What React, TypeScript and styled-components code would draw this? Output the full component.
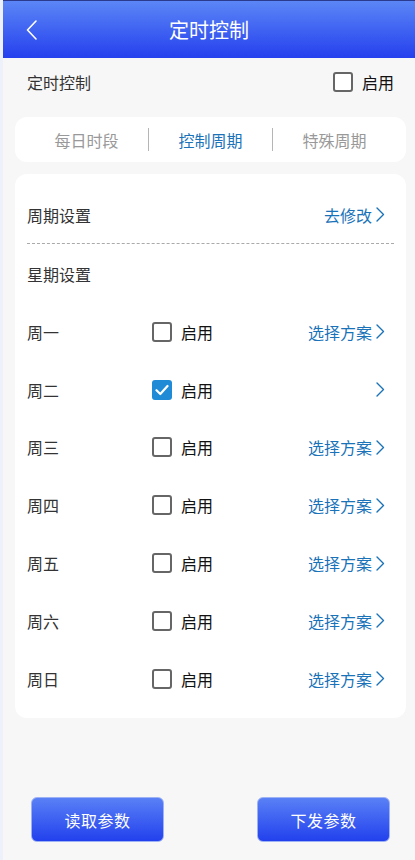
import React, { useState } from "react";
import styled, { createGlobalStyle } from "styled-components";

const Global = createGlobalStyle`
  html, body { margin: 0; padding: 0; background: #f7f7f7; }
  body { font-family: "Noto Sans CJK SC", "Noto Sans", sans-serif; }
  * { box-sizing: border-box; }
`;

const Page = styled.div`
  width: 415px;
  height: 860px;
  background: #f7f7f7;
  border-left: 3px solid #edf2fa;
  display: flex;
  flex-direction: column;
  overflow: hidden;
`;

const Header = styled.header`
  height: 58px;
  margin-left: -3px;
  border-top: 1px solid #2c3a8e;
  background: linear-gradient(180deg, #5b86f6 0%, #2540ee 100%);
  display: grid;
  grid-template-columns: 60px 1fr 60px;
  align-items: center;
  color: #fff;
`;

const BackBtn = styled.div`
  display: flex;
  align-items: center;
  padding-left: 26px;
`;

const Title = styled.h1`
  margin: 0;
  font-size: 20px;
  font-weight: 400;
  text-align: center;
  letter-spacing: 0;
  margin-left: 3px;
`;

const TopRow = styled.div`
  height: 48px;
  display: flex;
  align-items: center;
  justify-content: space-between;
  padding: 0 21px 0 24px;
`;

const Label = styled.span`
  font-size: 16px;
  color: #333;
`;

const CheckWrap = styled.label`
  display: flex;
  align-items: center;
  gap: 9px;
  cursor: pointer;
`;

const Box = styled.span<{ $checked: boolean }>`
  width: 20px;
  height: 20px;
  border-radius: 3px;
  border: ${(p) => (p.$checked ? "none" : "2px solid #666")};
  background: ${(p) => (p.$checked ? "#1f8ad6" : "#fff")};
  display: flex;
  align-items: center;
  justify-content: center;
`;

const EnableText = styled.span`
  font-size: 16px;
  color: #111;
`;

const Cards = styled.div`
  padding: 11px 9px 0 12px;
  display: flex;
  flex-direction: column;
  gap: 12px;
`;

const TabCard = styled.div`
  background: #fff;
  border-radius: 12px;
  height: 45px;
  padding: 0 10px;
  display: flex;
  align-items: center;
`;

const Tab = styled.div<{ $active: boolean }>`
  flex: 1;
  text-align: center;
  font-size: 16px;
  color: ${(p) => (p.$active ? "#1a73b9" : "#999")};
`;

const TabSep = styled.div`
  width: 1px;
  height: 23px;
  background: #b5b5b5;
`;

const MainCard = styled.div`
  background: #fff;
  border-radius: 12px;
  padding: 12px 12px 10px 12px;
  display: flex;
  flex-direction: column;
`;

const SettingRow = styled.div<{ $h: number; $dashed?: boolean }>`
  height: ${(p) => p.$h}px;
  display: flex;
  align-items: center;
  justify-content: space-between;
  border-bottom: ${(p) => (p.$dashed ? "1px dashed #aaa" : "none")};
`;

const WeekRow = styled.div`
  height: 57.8px;
  display: grid;
  grid-template-columns: 125px 1fr auto;
  align-items: center;
`;

const Link = styled.span`
  display: flex;
  align-items: center;
  gap: 4px;
  font-size: 16px;
  color: #1a73b9;
  padding-right: 9px;
`;

const Footer = styled.div`
  margin-top: auto;
  padding: 0 25px 18px 28px;
  display: flex;
  justify-content: space-between;
`;

const ActionButton = styled.button`
  width: 133px;
  height: 45px;
  border-radius: 6px;
  border: 1px solid #9db2f5;
  background: linear-gradient(180deg, #5a80f6 0%, #2241ed 100%);
  color: #fff;
  font-family: inherit;
  font-size: 16px;
  letter-spacing: 0.5px;
  cursor: pointer;
`;

const Chevron = ({ color, w = 9, h = 15, sw = 1.4 }: { color: string; w?: number; h?: number; sw?: number }) => (
  <svg width={w} height={h} viewBox={`0 0 ${w} ${h}`} fill="none">
    <path d={`M1 1 L${w - 1.5} ${h / 2} L1 ${h - 1}`} stroke={color} strokeWidth={sw} strokeLinecap="round" strokeLinejoin="round" />
  </svg>
);

const BackIcon = () => (
  <svg width="11" height="20" viewBox="0 0 11 20" fill="none">
    <path d="M10 1 L1.5 10 L10 19" stroke="#fff" strokeWidth="1.6" strokeLinecap="round" strokeLinejoin="round" />
  </svg>
);

const CheckMark = () => (
  <svg width="14" height="12" viewBox="0 0 14 12" fill="none">
    <path d="M1.5 6.2 L5.3 10 L12.5 2" stroke="#fff" strokeWidth="2.2" strokeLinecap="round" strokeLinejoin="round" />
  </svg>
);

const Check = ({ checked, onToggle }: { checked: boolean; onToggle: () => void }) => (
  <CheckWrap onClick={onToggle}>
    <Box $checked={checked}>{checked && <CheckMark />}</Box>
    <EnableText>启用</EnableText>
  </CheckWrap>
);

const days = ["周一", "周二", "周三", "周四", "周五", "周六", "周日"];

export default function App() {
  const [enabled, setEnabled] = useState(false);
  const [week, setWeek] = useState<boolean[]>([false, true, false, false, false, false, false]);
  const tabs = ["每日时段", "控制周期", "特殊周期"];

  return (
    <Page>
      <Global />
      <Header>
        <BackBtn>
          <BackIcon />
        </BackBtn>
        <Title>定时控制</Title>
        <div />
      </Header>
      <TopRow>
        <Label>定时控制</Label>
        <Check checked={enabled} onToggle={() => setEnabled(!enabled)} />
      </TopRow>
      <Cards>
        <TabCard>
          {tabs.map((t, i) => (
            <React.Fragment key={t}>
              {i > 0 && <TabSep />}
              <Tab $active={i === 1}>{t}</Tab>
            </React.Fragment>
          ))}
        </TabCard>
        <MainCard>
          <SettingRow $h={58} $dashed>
            <Label>周期设置</Label>
            <Link>
              去修改
              <Chevron color="#1a73b9" />
            </Link>
          </SettingRow>
          <SettingRow $h={59}>
            <Label>星期设置</Label>
          </SettingRow>
          {days.map((d, i) => (
            <WeekRow key={d}>
              <Label>{d}</Label>
              <Check
                checked={week[i]}
                onToggle={() => setWeek(week.map((v, j) => (j === i ? !v : v)))}
              />
              <Link>
                {!week[i] && "选择方案"}
                <Chevron color="#1a73b9" />
              </Link>
            </WeekRow>
          ))}
        </MainCard>
      </Cards>
      <Footer>
        <ActionButton>读取参数</ActionButton>
        <ActionButton>下发参数</ActionButton>
      </Footer>
    </Page>
  );
}
